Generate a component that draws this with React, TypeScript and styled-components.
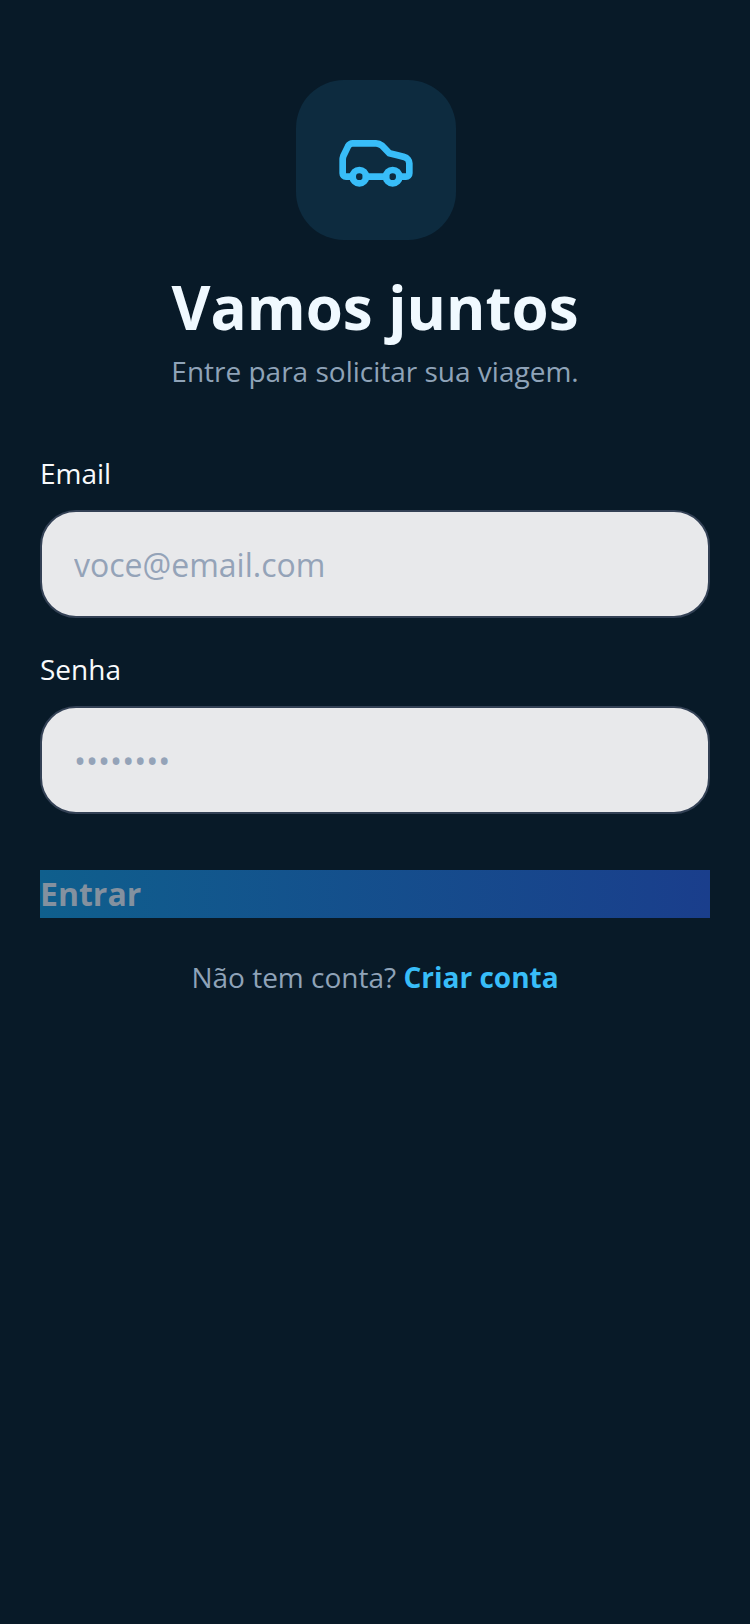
import React from "react";
import styled, { createGlobalStyle } from "styled-components";
import { Car } from "lucide-react";

const Global = createGlobalStyle`
  html, body { margin: 0; padding: 0; background: #081a28; }
  * { box-sizing: border-box; }
  input::placeholder { color: #94a3b8; opacity: 1; }
`;

const Page = styled.main`
  width: 750px;
  height: 1624px;
  padding: 80px 40px 0;
  background: #081a28;
  font-family: "Open Sans", sans-serif;
  display: flex;
  flex-direction: column;
`;

const Header = styled.header`
  display: flex;
  flex-direction: column;
  align-items: center;
`;

const LogoBox = styled.div`
  width: 160px;
  height: 160px;
  margin-left: 2px;
  border-radius: 48px;
  background: #0d2b3f;
  color: #38bdf8;
  display: flex;
  align-items: center;
  justify-content: center;
`;

const Title = styled.h1`
  margin: 25px 0 0;
  font-size: 60px;
  line-height: 84px;
  font-weight: 700;
  color: #f0f9ff;
`;

const Subtitle = styled.p`
  margin: 2px 0 0;
  font-size: 28px;
  line-height: 40px;
  color: #8fa3b8;
`;

const Form = styled.form`
  margin-top: 63px;
  display: flex;
  flex-direction: column;
`;

const Field = styled.div`
  display: flex;
  flex-direction: column;
  margin-bottom: 32px;
`;

const Label = styled.label`
  font-size: 28px;
  line-height: 38px;
  color: #f8fafc;
  margin-bottom: 18px;
`;

const Input = styled.input`
  width: 100%;
  height: 108px;
  padding: 0 32px;
  border: 2px solid #334155;
  border-radius: 36px;
  background: #e8e9eb;
  font-family: "Open Sans", sans-serif;
  font-size: 32px;
  outline: none;
`;

const Submit = styled.button`
  margin-top: 24px;
  height: 48px;
  width: 100%;
  padding: 0;
  border: none;
  background: linear-gradient(90deg, #0f5f8d, #1a3e8c);
  color: #84919f;
  font-family: "Open Sans", sans-serif;
  font-size: 32px;
  line-height: 48px;
  font-weight: 700;
  text-align: left;
`;

const Footer = styled.p`
  margin: 38px 0 0;
  text-align: center;
  font-size: 28px;
  line-height: 42px;
  color: #8fa3b8;
`;

const FooterLink = styled.a`
  color: #38bdf8;
  font-weight: 700;
`;

export default function App() {
  return (
    <>
      <Global />
      <Page>
        <Header>
          <LogoBox>
            <Car size={80} strokeWidth={2} />
          </LogoBox>
          <Title>Vamos juntos</Title>
          <Subtitle>Entre para solicitar sua viagem.</Subtitle>
        </Header>
        <Form onSubmit={(e) => e.preventDefault()}>
          <Field>
            <Label htmlFor="email">Email</Label>
            <Input id="email" type="email" placeholder="voce@email.com" />
          </Field>
          <Field>
            <Label htmlFor="senha">Senha</Label>
            <Input id="senha" type="password" placeholder="••••••••" />
          </Field>
          <Submit type="submit">Entrar</Submit>
        </Form>
        <Footer>
          Não tem conta? <FooterLink>Criar conta</FooterLink>
        </Footer>
      </Page>
    </>
  );
}
